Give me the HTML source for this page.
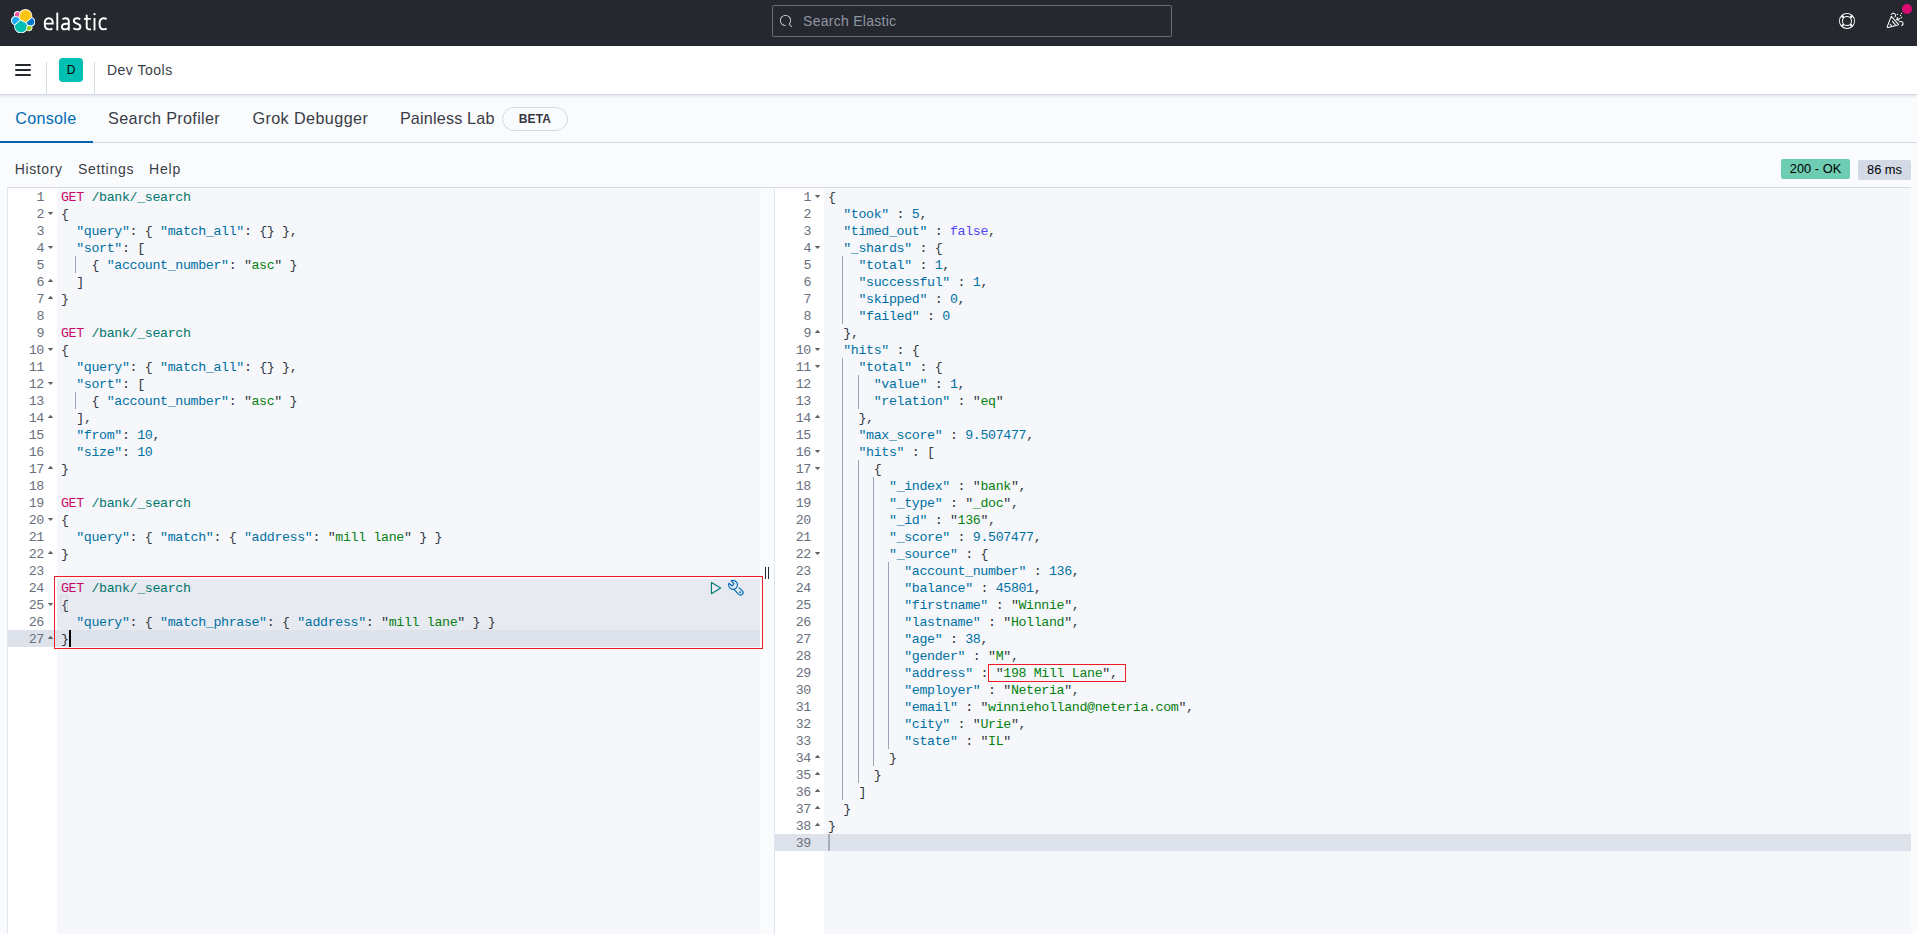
<!DOCTYPE html>
<html lang="en">
<head>
<meta charset="utf-8">
<title>Dev Tools - Console - Elastic</title>
<style>
*{box-sizing:border-box;margin:0;padding:0}
html,body{width:1917px;height:934px;overflow:hidden}
body{position:relative;background:#fafbfd;font-family:"Liberation Sans",sans-serif;color:#343741}
.abs{position:absolute}
/* top dark header */
#hdr{position:absolute;left:0;top:0;width:1917px;height:46px;background:#25282f}
#search{position:absolute;left:772px;top:5px;width:400px;height:32px;border:1px solid #696c73;border-radius:2px;background:#25282f}
#search span{position:absolute;left:30.1px;top:5px;line-height:20px;font-size:14px;letter-spacing:.269px;color:#8f96a3;white-space:nowrap}
/* second header */
#hdr2{position:absolute;left:0;top:46px;width:1917px;height:49px;background:#fff;border-bottom:1px solid #d3dae6;box-shadow:0 2px 3px -1px rgba(152,162,179,.35)}
.vdiv{position:absolute;top:16px;width:1px;height:32px;background:#d3dae6}
#burger i{position:absolute;left:15px;width:16px;height:2px;background:#25282f;border-radius:1px}
#avatar{position:absolute;left:59px;top:12px;width:24px;height:24px;border-radius:4px;background:#00bfb3;color:#000;font-size:12px;line-height:24px;text-align:center}
#crumb{position:absolute;left:106.9px;top:14px;font-size:14px;line-height:20px;letter-spacing:.512px;color:#3a3d48;white-space:nowrap}
/* tabs */
#tabs{position:absolute;left:0;top:95px;width:1917px;height:48px;border-bottom:1px solid #d3dae6}
.tab{position:absolute;top:13px;font-size:16.2px;line-height:20px;color:#3a3d48;white-space:nowrap}
#tab-active-line{position:absolute;left:0;top:141px;width:93px;height:2px;background:#0063ad}
#beta{position:absolute;left:502px;top:107px;width:66px;height:24px;border:1px solid #d3dae6;border-radius:12px;background:#fafbfd}
#beta span{position:absolute;left:15.8px;top:1px;font-size:12px;font-weight:bold;letter-spacing:.15px;line-height:20px;color:#343741}
/* menu */
.menu{position:absolute;top:159px;font-size:14px;line-height:20px;color:#3a3d48;white-space:nowrap}
.badge{position:absolute;font-size:12.85px;line-height:20px;text-align:center;color:#000;border-radius:2px}
/* editors */
.editor{position:absolute;top:187px;height:747px;background:#f5f7fa;border-top:1px solid #d3dae6;border-left:1px solid #e0e5ee}
.gutter{position:absolute;left:0;top:0;width:49px;height:746px;background:#fff}
.cl{position:absolute;height:17px;line-height:17px;font-family:"Liberation Mono",monospace;font-size:13.3px;letter-spacing:-.3613px;white-space:pre;color:#343741}
.ln{position:absolute;width:40px;height:17px;line-height:17px;text-align:right;font-family:"Liberation Mono",monospace;font-size:13.3px;letter-spacing:-.3613px;color:#69707d}
.fd,.fu{position:absolute;width:5.6px;height:3.2px;background:#636363}
.fd{clip-path:polygon(0 0,100% 0,50% 100%)}
.fu{clip-path:polygon(0 100%,100% 100%,50% 0)}
.ig{position:absolute;width:1px;background:#9ba4b6}
.m{color:#c80a68}.u{color:#00756c}.v{color:#0070a3}.s{color:#078012}.q{color:#343741}.n{color:#0070a3}.b{color:#4f46f0}.p{color:#343741}
</style>
</head>
<body>

<!-- ===== top header ===== -->
<div id="hdr">
  <svg class="abs" style="left:10.8px;top:8.9px" width="24.4" height="24.4" viewBox="0 0 32 32">
    <path fill="#fff" d="M32 16.77a6.334 6.334 0 0 0-4.197-5.972 9.094 9.094 0 0 0 .161-1.723A9.075 9.075 0 0 0 18.897.001a9.044 9.044 0 0 0-7.352 3.767A4.826 4.826 0 0 0 8.588 2.75a4.835 4.835 0 0 0-4.830 4.830c0 .582.106 1.140.294 1.656A6.380 6.380 0 0 0 0 15.181a6.342 6.342 0 0 0 4.211 5.980 9.036 9.036 0 0 0-.162 1.722A9.059 9.059 0 0 0 13.103 32a9.050 9.050 0 0 0 7.351-3.781 4.805 4.805 0 0 0 2.954 1.023 4.835 4.835 0 0 0 4.830-4.830c0-.580-.105-1.138-.294-1.654A6.383 6.383 0 0 0 32 16.769"/>
    <path fill="#fec514" d="M12.58 13.787l7.002 3.198 7.066-6.192a7.821 7.821 0 0 0 .15-1.557 7.889 7.889 0 0 0-7.890-7.890 7.868 7.868 0 0 0-6.500 3.427l-1.177 6.099 1.350 2.915z"/>
    <path fill="#00bfb3" d="M5.333 21.215a7.942 7.942 0 0 0-.152 1.580c0 4.362 3.550 7.912 7.913 7.912a7.896 7.896 0 0 0 6.524-3.446l1.166-6.076-1.556-2.975-7.030-3.203-6.865 6.208z"/>
    <path fill="#f04e98" d="M5.289 9.098l4.798 1.133 1.051-5.456a3.787 3.787 0 0 0-5.849 4.323"/>
    <path fill="#1ba9f5" d="M4.872 10.240a5.366 5.366 0 0 0-3.624 5.048 5.317 5.317 0 0 0 3.424 4.970l6.732-6.085-1.236-2.641-5.296-1.292z"/>
    <path fill="#93c90e" d="M20.873 27.253a3.767 3.767 0 0 0 2.308.796 3.790 3.790 0 0 0 3.550-5.105l-4.797-1.123-1.060 5.432z"/>
    <path fill="#07c" d="M21.848 20.563l5.282 1.235a5.386 5.386 0 0 0 3.623-5.049 5.310 5.310 0 0 0-3.432-4.963l-6.908 6.052 1.435 2.725z"/>
  </svg>
  <svg class="abs" style="left:0;top:0" width="120" height="46" viewBox="0 0 120 46" fill="none" stroke="#fff" stroke-width="1.9">
    <path d="M44.9 23.6H52.8C52.8 20 51.5 18.2 48.8 18.2C46 18.2 44.7 20.6 44.7 23.8C44.7 27.4 46.3 29.4 49.2 29.4C50.6 29.4 51.6 29.1 52.4 28.6"/>
    <path d="M57.3 12.6V30.4"/>
    <path d="M62.5 19.3C63.5 18.6 64.6 18.2 65.8 18.2C67.9 18.2 68.8 19.4 68.8 21.6V30.4M68.8 23.7H66.4C63.4 23.7 61.9 24.7 61.9 26.7C61.9 28.4 63 29.4 64.9 29.4C66.9 29.4 68.8 28.2 68.8 26.2"/>
    <path d="M80.3 19.2C79.3 18.6 78.2 18.2 77 18.2C75 18.2 73.8 19.2 73.8 20.8C73.8 22.4 75 23 77 23.7C79.2 24.4 80.4 25.1 80.4 26.7C80.4 28.4 79.1 29.4 77 29.4C75.6 29.4 74.4 29 73.4 28.3"/>
    <path d="M86.7 14.8V26.6C86.7 28.5 87.6 29.4 89.2 29.4C89.9 29.4 90.5 29.3 91 29.1M83.9 18.9H90.8"/>
    <path d="M94.5 18V30.4"/>
    <circle cx="94.5" cy="14.2" r="1.15" fill="#fff" stroke="none"/>
    <path d="M106.6 19.1C105.7 18.5 104.7 18.2 103.6 18.2C100.8 18.2 99.5 20.4 99.5 23.8C99.5 27.2 100.9 29.4 103.6 29.4C104.8 29.4 105.8 29.1 106.7 28.5"/>
  </svg>
  <div id="search">
    <svg class="abs" style="left:6.9px;top:8.8px" width="12.6" height="12.6" viewBox="0 0 16 16"><path fill="#d4d7dd" d="M11.271 11.978l3.872 3.873a.502.502 0 00.708 0 .502.502 0 000-.708l-3.565-3.564c2.38-2.747 2.267-6.923-.342-9.532-2.73-2.73-7.17-2.73-9.898 0-2.728 2.729-2.728 7.17 0 9.9a6.955 6.955 0 004.949 2.05.5.5 0 000-1 5.96 5.96 0 01-4.242-1.757 6.01 6.01 0 010-8.486 6.004 6.004 0 018.484 0 6.01 6.01 0 010 8.486.5.5 0 00.034.738z"/></svg>
    <span>Search Elastic</span>
  </div>
  <!-- help icon -->
  <svg class="abs" style="left:1839px;top:13px" width="16" height="16" viewBox="0 0 16 16"><path fill="#fff" d="M13.6 12.186l-1.357-1.358c-.025-.025-.058-.034-.084-.056.53-.794.84-1.746.84-2.773a4.977 4.977 0 00-.84-2.772c.026-.02.059-.03.084-.056L13.6 3.813a6.96 6.96 0 010 8.373zM8 15A6.956 6.956 0 013.814 13.6l1.358-1.358c.025-.025.034-.057.055-.084C6.02 12.688 6.974 13 8 13a4.978 4.978 0 002.773-.84c.02.026.03.058.056.083l1.357 1.358A6.956 6.956 0 018 15zm-5.601-2.813a6.963 6.963 0 010-8.373l1.359 1.358c.024.025.057.035.084.056A4.97 4.97 0 003 8c0 1.027.31 1.98.842 2.773-.027.022-.06.031-.084.056l-1.36 1.358zm5.6-.187A4 4 0 118 4a4 4 0 010 8zM8 1c1.573 0 3.019.525 4.187 1.4l-1.357 1.358c-.025.025-.035.057-.056.084A4.979 4.979 0 008 3a4.979 4.979 0 00-2.773.842c-.021-.027-.03-.059-.055-.084L3.814 2.4A6.957 6.957 0 018 1zm0-1a8 8 0 100 16A8 8 0 008 0z"/></svg>
  <!-- cheer icon -->
  <svg class="abs" style="left:1880px;top:8px" width="30" height="26" viewBox="1880 8 30 26" fill="none" stroke="#fff" stroke-width="1.05" stroke-linejoin="round" stroke-linecap="round">
    <path d="M1891.3 16.4L1887.3 26.4C1887 27.2 1887.5 27.7 1888.3 27.5L1897.8 25.1C1898.5 24.9 1898.6 24.3 1898.1 23.8z"/>
    <path d="M1892.5 21.3L1895.2 24.6M1890.1 24.2L1891.6 25.8"/>
    <path d="M1891.3 14.4C1892 13.2 1894 12.9 1895 14C1895.8 14.9 1895.6 15.9 1895.1 16.7"/>
    <path d="M1900 18.4L1896.7 19.7M1897.4 17.5L1896.7 19.7L1898.8 20.3"/>
    <path d="M1899.5 21.9C1900.6 21.1 1902.2 21.3 1902.8 22.6C1903.3 23.7 1902.7 25 1901.7 25.6"/>
    <path d="M1897.4 14.4l.01 0M1900.5 15.5l.01 0M1901.5 13.3l.01 0M1901.6 17.5l.01 0" stroke-width="1.3"/>
  </svg>
  <div class="abs" style="left:1901.6px;top:3.6px;width:10.6px;height:10.6px;border-radius:50%;background:#dd0a73"></div>
</div>

<!-- ===== second header ===== -->
<div id="hdr2">
  <div id="burger"><i style="top:18px"></i><i style="top:23px"></i><i style="top:28px"></i></div>
  <div class="vdiv" style="left:46px;height:33px"></div>
  <div id="avatar">D</div>
  <div class="vdiv" style="left:94px;height:33px"></div>
  <div id="crumb">Dev Tools</div>
</div>

<!-- ===== tabs ===== -->
<div id="tabs">
  <div class="tab" style="left:15.3px;letter-spacing:.24px;color:#006bb4">Console</div>
  <div class="tab" style="left:108.1px;letter-spacing:.329px">Search Profiler</div>
  <div class="tab" style="left:252.4px;letter-spacing:.4px">Grok Debugger</div>
  <div class="tab" style="left:399.9px;letter-spacing:.17px">Painless Lab</div>
</div>
<div id="tab-active-line"></div>
<div id="beta"><span>BETA</span></div>

<!-- ===== console menu ===== -->
<div class="menu" style="left:14.8px;letter-spacing:.6px">History</div>
<div class="menu" style="left:77.9px;letter-spacing:.7px">Settings</div>
<div class="menu" style="left:149px;letter-spacing:.8px">Help</div>
<div class="badge" style="left:1781px;top:159px;width:69px;height:20px;background:#6dccb1">200 - OK</div>
<div class="badge" style="left:1858px;top:160px;width:53px;height:20px;background:#d3dae6">86 ms</div>

<!-- ===== left editor ===== -->
<div class="abs" style="left:7px;top:187px;width:1904px;height:1px;background:#d3dae6"></div>
<div class="editor" style="left:7px;width:753px"><div class="gutter"></div></div>
<!-- selected request highlight -->
<div class="abs" style="left:57px;top:579px;width:703px;height:68px;background:#e7eaf1"></div>
<!-- active line -->
<div class="abs" style="left:8px;top:630px;width:752px;height:17px;background:#dde2eb"></div>
<!-- bracket match -->
<div class="abs" style="left:60px;top:595px;width:8px;height:17px;border:1px solid #d6dae4;border-radius:2px"></div>
<div class="ig" style="left:75px;top:256px;height:17px"></div>
<div class="ig" style="left:75px;top:392px;height:17px"></div>
<div class="ln" style="left:4px;top:189px">1</div>
<div class="ln" style="left:4px;top:206px">2</div>
<div class="fd" style="left:47.75px;top:211.9px"></div>
<div class="ln" style="left:4px;top:223px">3</div>
<div class="ln" style="left:4px;top:240px">4</div>
<div class="fd" style="left:47.75px;top:245.9px"></div>
<div class="ln" style="left:4px;top:257px">5</div>
<div class="ln" style="left:4px;top:274px">6</div>
<div class="fu" style="left:47.75px;top:278.8px"></div>
<div class="ln" style="left:4px;top:291px">7</div>
<div class="fu" style="left:47.75px;top:295.8px"></div>
<div class="ln" style="left:4px;top:308px">8</div>
<div class="ln" style="left:4px;top:325px">9</div>
<div class="ln" style="left:4px;top:342px">10</div>
<div class="fd" style="left:47.75px;top:347.9px"></div>
<div class="ln" style="left:4px;top:359px">11</div>
<div class="ln" style="left:4px;top:376px">12</div>
<div class="fd" style="left:47.75px;top:381.9px"></div>
<div class="ln" style="left:4px;top:393px">13</div>
<div class="ln" style="left:4px;top:410px">14</div>
<div class="fu" style="left:47.75px;top:414.8px"></div>
<div class="ln" style="left:4px;top:427px">15</div>
<div class="ln" style="left:4px;top:444px">16</div>
<div class="ln" style="left:4px;top:461px">17</div>
<div class="fu" style="left:47.75px;top:465.8px"></div>
<div class="ln" style="left:4px;top:478px">18</div>
<div class="ln" style="left:4px;top:495px">19</div>
<div class="ln" style="left:4px;top:512px">20</div>
<div class="fd" style="left:47.75px;top:517.9px"></div>
<div class="ln" style="left:4px;top:529px">21</div>
<div class="ln" style="left:4px;top:546px">22</div>
<div class="fu" style="left:47.75px;top:550.8px"></div>
<div class="ln" style="left:4px;top:563px">23</div>
<div class="ln" style="left:4px;top:580px">24</div>
<div class="ln" style="left:4px;top:597px">25</div>
<div class="fd" style="left:47.75px;top:602.9px"></div>
<div class="ln" style="left:4px;top:614px">26</div>
<div class="ln" style="left:4px;top:631px">27</div>
<div class="fu" style="left:47.75px;top:635.8px"></div>
<div class="cl" style="left:61px;top:189px"><span class="m">GET</span> <span class="u">/bank/_search</span></div>
<div class="cl" style="left:61px;top:206px"><span class="p">{</span></div>
<div class="cl" style="left:61px;top:223px">  <span class="v">"query"</span><span class="p">:</span> <span class="p">{</span> <span class="v">"match_all"</span><span class="p">:</span> <span class="p">{</span><span class="p">}</span> <span class="p">}</span><span class="p">,</span></div>
<div class="cl" style="left:61px;top:240px">  <span class="v">"sort"</span><span class="p">:</span> <span class="p">[</span></div>
<div class="cl" style="left:61px;top:257px">    <span class="p">{</span> <span class="v">"account_number"</span><span class="p">:</span> <span class="q">"</span><span class="s">asc</span><span class="q">"</span> <span class="p">}</span></div>
<div class="cl" style="left:61px;top:274px">  <span class="p">]</span></div>
<div class="cl" style="left:61px;top:291px"><span class="p">}</span></div>
<div class="cl" style="left:61px;top:325px"><span class="m">GET</span> <span class="u">/bank/_search</span></div>
<div class="cl" style="left:61px;top:342px"><span class="p">{</span></div>
<div class="cl" style="left:61px;top:359px">  <span class="v">"query"</span><span class="p">:</span> <span class="p">{</span> <span class="v">"match_all"</span><span class="p">:</span> <span class="p">{</span><span class="p">}</span> <span class="p">}</span><span class="p">,</span></div>
<div class="cl" style="left:61px;top:376px">  <span class="v">"sort"</span><span class="p">:</span> <span class="p">[</span></div>
<div class="cl" style="left:61px;top:393px">    <span class="p">{</span> <span class="v">"account_number"</span><span class="p">:</span> <span class="q">"</span><span class="s">asc</span><span class="q">"</span> <span class="p">}</span></div>
<div class="cl" style="left:61px;top:410px">  <span class="p">]</span><span class="p">,</span></div>
<div class="cl" style="left:61px;top:427px">  <span class="v">"from"</span><span class="p">:</span> <span class="n">10</span><span class="p">,</span></div>
<div class="cl" style="left:61px;top:444px">  <span class="v">"size"</span><span class="p">:</span> <span class="n">10</span></div>
<div class="cl" style="left:61px;top:461px"><span class="p">}</span></div>
<div class="cl" style="left:61px;top:495px"><span class="m">GET</span> <span class="u">/bank/_search</span></div>
<div class="cl" style="left:61px;top:512px"><span class="p">{</span></div>
<div class="cl" style="left:61px;top:529px">  <span class="v">"query"</span><span class="p">:</span> <span class="p">{</span> <span class="v">"match"</span><span class="p">:</span> <span class="p">{</span> <span class="v">"address"</span><span class="p">:</span> <span class="q">"</span><span class="s">mill lane</span><span class="q">"</span> <span class="p">}</span> <span class="p">}</span></div>
<div class="cl" style="left:61px;top:546px"><span class="p">}</span></div>
<div class="cl" style="left:61px;top:580px"><span class="m">GET</span> <span class="u">/bank/_search</span></div>
<div class="cl" style="left:61px;top:597px"><span class="p">{</span></div>
<div class="cl" style="left:61px;top:614px">  <span class="v">"query"</span><span class="p">:</span> <span class="p">{</span> <span class="v">"match_phrase"</span><span class="p">:</span> <span class="p">{</span> <span class="v">"address"</span><span class="p">:</span> <span class="q">"</span><span class="s">mill lane</span><span class="q">"</span> <span class="p">}</span> <span class="p">}</span></div>
<div class="cl" style="left:61px;top:631px"><span class="p">}</span></div>
<!-- cursor -->
<div class="abs" style="left:68.5px;top:630px;width:2px;height:17px;background:#000"></div>
<!-- action icons -->
<svg class="abs" style="left:704px;top:576px" width="48" height="24" viewBox="704 576 48 24" fill="none" stroke-linejoin="round" stroke-linecap="round">
  <path stroke="#017d73" stroke-width="1.15" d="M711.45 582.4L720.7 587.95L711.45 593.7z"/>
  <g stroke="#006bb4" stroke-width="1.15">
    <path d="M731.18 580.76L734.0 583.7L732.2 586.0L728.83 583.26A4.5 4.5 0 1 0 731.18 580.76"/>
    <path d="M733.9 589.3L738.8 594.4A2.55 2.55 0 0 0 742.4 590.8L739.2 587.8"/>
  </g>
  <circle cx="740.2" cy="592.2" r=".95" fill="#006bb4"/>
</svg>
<!-- red annotation rectangle (left) -->
<div class="abs" style="left:54px;top:576px;width:709px;height:73px;border:1.5px solid #ed1c24"></div>

<!-- resizer -->
<div class="abs" style="left:765px;top:567px;width:1px;height:12px;background:#25282f"></div>
<div class="abs" style="left:768px;top:567px;width:1px;height:12px;background:#25282f"></div>

<!-- ===== right editor ===== -->
<div class="editor" style="left:774px;width:1137px"><div class="gutter"></div></div>
<div class="abs" style="left:775px;top:834px;width:1136px;height:17px;background:#dde2eb"></div>
<div class="ig" style="left:842px;top:256px;height:68px"></div>
<div class="ig" style="left:842px;top:358px;height:442px"></div>
<div class="ig" style="left:858px;top:375px;height:34px"></div>
<div class="ig" style="left:858px;top:460px;height:323px"></div>
<div class="ig" style="left:873px;top:477px;height:289px"></div>
<div class="ig" style="left:888px;top:562px;height:187px"></div>
<div class="ln" style="left:771px;top:189px">1</div>
<div class="fd" style="left:814.75px;top:194.9px"></div>
<div class="ln" style="left:771px;top:206px">2</div>
<div class="ln" style="left:771px;top:223px">3</div>
<div class="ln" style="left:771px;top:240px">4</div>
<div class="fd" style="left:814.75px;top:245.9px"></div>
<div class="ln" style="left:771px;top:257px">5</div>
<div class="ln" style="left:771px;top:274px">6</div>
<div class="ln" style="left:771px;top:291px">7</div>
<div class="ln" style="left:771px;top:308px">8</div>
<div class="ln" style="left:771px;top:325px">9</div>
<div class="fu" style="left:814.75px;top:329.8px"></div>
<div class="ln" style="left:771px;top:342px">10</div>
<div class="fd" style="left:814.75px;top:347.9px"></div>
<div class="ln" style="left:771px;top:359px">11</div>
<div class="fd" style="left:814.75px;top:364.9px"></div>
<div class="ln" style="left:771px;top:376px">12</div>
<div class="ln" style="left:771px;top:393px">13</div>
<div class="ln" style="left:771px;top:410px">14</div>
<div class="fu" style="left:814.75px;top:414.8px"></div>
<div class="ln" style="left:771px;top:427px">15</div>
<div class="ln" style="left:771px;top:444px">16</div>
<div class="fd" style="left:814.75px;top:449.9px"></div>
<div class="ln" style="left:771px;top:461px">17</div>
<div class="fd" style="left:814.75px;top:466.9px"></div>
<div class="ln" style="left:771px;top:478px">18</div>
<div class="ln" style="left:771px;top:495px">19</div>
<div class="ln" style="left:771px;top:512px">20</div>
<div class="ln" style="left:771px;top:529px">21</div>
<div class="ln" style="left:771px;top:546px">22</div>
<div class="fd" style="left:814.75px;top:551.9px"></div>
<div class="ln" style="left:771px;top:563px">23</div>
<div class="ln" style="left:771px;top:580px">24</div>
<div class="ln" style="left:771px;top:597px">25</div>
<div class="ln" style="left:771px;top:614px">26</div>
<div class="ln" style="left:771px;top:631px">27</div>
<div class="ln" style="left:771px;top:648px">28</div>
<div class="ln" style="left:771px;top:665px">29</div>
<div class="ln" style="left:771px;top:682px">30</div>
<div class="ln" style="left:771px;top:699px">31</div>
<div class="ln" style="left:771px;top:716px">32</div>
<div class="ln" style="left:771px;top:733px">33</div>
<div class="ln" style="left:771px;top:750px">34</div>
<div class="fu" style="left:814.75px;top:754.8px"></div>
<div class="ln" style="left:771px;top:767px">35</div>
<div class="fu" style="left:814.75px;top:771.8px"></div>
<div class="ln" style="left:771px;top:784px">36</div>
<div class="fu" style="left:814.75px;top:788.8px"></div>
<div class="ln" style="left:771px;top:801px">37</div>
<div class="fu" style="left:814.75px;top:805.8px"></div>
<div class="ln" style="left:771px;top:818px">38</div>
<div class="fu" style="left:814.75px;top:822.8px"></div>
<div class="ln" style="left:771px;top:835px">39</div>
<div class="cl" style="left:828px;top:189px"><span class="p">{</span></div>
<div class="cl" style="left:828px;top:206px">  <span class="v">"took"</span> <span class="p">:</span> <span class="n">5</span><span class="p">,</span></div>
<div class="cl" style="left:828px;top:223px">  <span class="v">"timed_out"</span> <span class="p">:</span> <span class="b">false</span><span class="p">,</span></div>
<div class="cl" style="left:828px;top:240px">  <span class="v">"_shards"</span> <span class="p">:</span> <span class="p">{</span></div>
<div class="cl" style="left:828px;top:257px">    <span class="v">"total"</span> <span class="p">:</span> <span class="n">1</span><span class="p">,</span></div>
<div class="cl" style="left:828px;top:274px">    <span class="v">"successful"</span> <span class="p">:</span> <span class="n">1</span><span class="p">,</span></div>
<div class="cl" style="left:828px;top:291px">    <span class="v">"skipped"</span> <span class="p">:</span> <span class="n">0</span><span class="p">,</span></div>
<div class="cl" style="left:828px;top:308px">    <span class="v">"failed"</span> <span class="p">:</span> <span class="n">0</span></div>
<div class="cl" style="left:828px;top:325px">  <span class="p">}</span><span class="p">,</span></div>
<div class="cl" style="left:828px;top:342px">  <span class="v">"hits"</span> <span class="p">:</span> <span class="p">{</span></div>
<div class="cl" style="left:828px;top:359px">    <span class="v">"total"</span> <span class="p">:</span> <span class="p">{</span></div>
<div class="cl" style="left:828px;top:376px">      <span class="v">"value"</span> <span class="p">:</span> <span class="n">1</span><span class="p">,</span></div>
<div class="cl" style="left:828px;top:393px">      <span class="v">"relation"</span> <span class="p">:</span> <span class="q">"</span><span class="s">eq</span><span class="q">"</span></div>
<div class="cl" style="left:828px;top:410px">    <span class="p">}</span><span class="p">,</span></div>
<div class="cl" style="left:828px;top:427px">    <span class="v">"max_score"</span> <span class="p">:</span> <span class="n">9.507477</span><span class="p">,</span></div>
<div class="cl" style="left:828px;top:444px">    <span class="v">"hits"</span> <span class="p">:</span> <span class="p">[</span></div>
<div class="cl" style="left:828px;top:461px">      <span class="p">{</span></div>
<div class="cl" style="left:828px;top:478px">        <span class="v">"_index"</span> <span class="p">:</span> <span class="q">"</span><span class="s">bank</span><span class="q">"</span><span class="p">,</span></div>
<div class="cl" style="left:828px;top:495px">        <span class="v">"_type"</span> <span class="p">:</span> <span class="q">"</span><span class="s">_doc</span><span class="q">"</span><span class="p">,</span></div>
<div class="cl" style="left:828px;top:512px">        <span class="v">"_id"</span> <span class="p">:</span> <span class="q">"</span><span class="s">136</span><span class="q">"</span><span class="p">,</span></div>
<div class="cl" style="left:828px;top:529px">        <span class="v">"_score"</span> <span class="p">:</span> <span class="n">9.507477</span><span class="p">,</span></div>
<div class="cl" style="left:828px;top:546px">        <span class="v">"_source"</span> <span class="p">:</span> <span class="p">{</span></div>
<div class="cl" style="left:828px;top:563px">          <span class="v">"account_number"</span> <span class="p">:</span> <span class="n">136</span><span class="p">,</span></div>
<div class="cl" style="left:828px;top:580px">          <span class="v">"balance"</span> <span class="p">:</span> <span class="n">45801</span><span class="p">,</span></div>
<div class="cl" style="left:828px;top:597px">          <span class="v">"firstname"</span> <span class="p">:</span> <span class="q">"</span><span class="s">Winnie</span><span class="q">"</span><span class="p">,</span></div>
<div class="cl" style="left:828px;top:614px">          <span class="v">"lastname"</span> <span class="p">:</span> <span class="q">"</span><span class="s">Holland</span><span class="q">"</span><span class="p">,</span></div>
<div class="cl" style="left:828px;top:631px">          <span class="v">"age"</span> <span class="p">:</span> <span class="n">38</span><span class="p">,</span></div>
<div class="cl" style="left:828px;top:648px">          <span class="v">"gender"</span> <span class="p">:</span> <span class="q">"</span><span class="s">M</span><span class="q">"</span><span class="p">,</span></div>
<div class="cl" style="left:828px;top:665px">          <span class="v">"address"</span> <span class="p">:</span> <span class="q">"</span><span class="s">198 Mill Lane</span><span class="q">"</span><span class="p">,</span></div>
<div class="cl" style="left:828px;top:682px">          <span class="v">"employer"</span> <span class="p">:</span> <span class="q">"</span><span class="s">Neteria</span><span class="q">"</span><span class="p">,</span></div>
<div class="cl" style="left:828px;top:699px">          <span class="v">"email"</span> <span class="p">:</span> <span class="q">"</span><span class="s">winnieholland@neteria.com</span><span class="q">"</span><span class="p">,</span></div>
<div class="cl" style="left:828px;top:716px">          <span class="v">"city"</span> <span class="p">:</span> <span class="q">"</span><span class="s">Urie</span><span class="q">"</span><span class="p">,</span></div>
<div class="cl" style="left:828px;top:733px">          <span class="v">"state"</span> <span class="p">:</span> <span class="q">"</span><span class="s">IL</span><span class="q">"</span></div>
<div class="cl" style="left:828px;top:750px">        <span class="p">}</span></div>
<div class="cl" style="left:828px;top:767px">      <span class="p">}</span></div>
<div class="cl" style="left:828px;top:784px">    <span class="p">]</span></div>
<div class="cl" style="left:828px;top:801px">  <span class="p">}</span></div>
<div class="cl" style="left:828px;top:818px"><span class="p">}</span></div>
<div class="abs" style="left:828px;top:834px;width:2px;height:17px;background:#a9adb8"></div>
<!-- red annotation rectangle (right) -->
<div class="abs" style="left:988px;top:664px;width:138px;height:18px;border:1.5px solid #ed1c24"></div>

</body>
</html>
